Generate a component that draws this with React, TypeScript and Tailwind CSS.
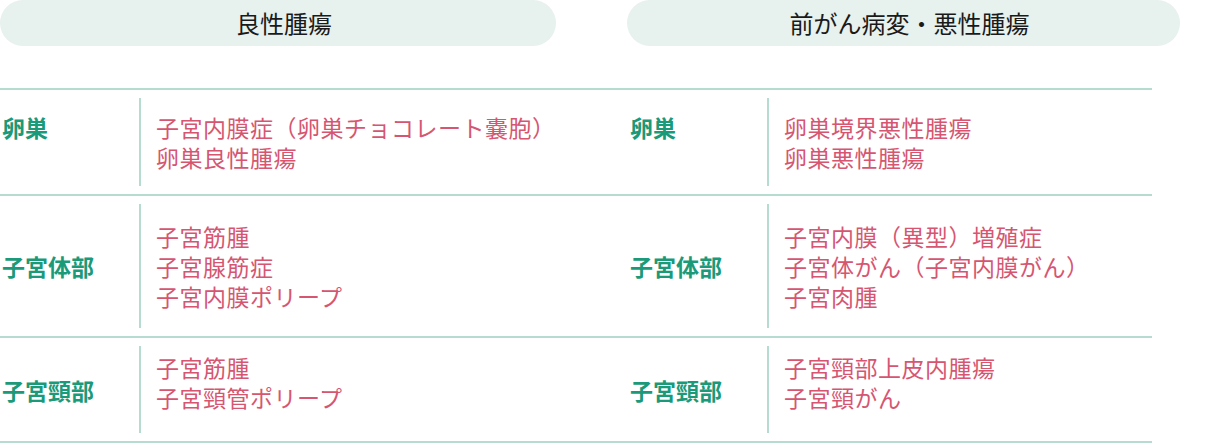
import React from "react";

type Row = { label: string; items: string[]; h: string; top?: boolean; up?: boolean };

const left: Row[] = [
  { label: "卵巣", items: ["子宮内膜症（卵巣チョコレート嚢胞）", "卵巣良性腫瘍"], h: "h-[106px]", top: true },
  { label: "子宮体部", items: ["子宮筋腫", "子宮腺筋症", "子宮内膜ポリープ"], h: "h-[142px]" },
  { label: "子宮頸部", items: ["子宮筋腫", "子宮頸管ポリープ"], h: "h-[105px]", up: true },
];

const right: Row[] = [
  { label: "卵巣", items: ["卵巣境界悪性腫瘍", "卵巣悪性腫瘍"], h: "h-[106px]", top: true },
  { label: "子宮体部", items: ["子宮内膜（異型）増殖症", "子宮体がん（子宮内膜がん）", "子宮肉腫"], h: "h-[142px]" },
  { label: "子宮頸部", items: ["子宮頸部上皮内腫瘍", "子宮頸がん"], h: "h-[105px]", up: true },
];

function Table({ rows, className }: { rows: Row[]; className: string }) {
  return (
    <div className={`border-t-2 border-[#b6dcd2] ${className}`}>
      {rows.map((r, i) => (
        <div key={i} className={`flex border-b-2 border-[#b6dcd2] ${r.h}`}>
          <div
            className={`w-[139px] shrink-0 pl-[2px] flex ${r.top ? "items-start pt-[22px]" : "items-center"} text-[23px] leading-[30px] font-bold text-[#1a9a79]`}
          >
            {r.label}
          </div>
          <div
            className={`my-[8px] border-l-2 border-[#b6dcd2] pl-[15px] flex flex-col justify-center text-[23px] leading-[30px] text-[#d65672] tracking-[0.5px] ${r.up ? "pb-[16px]" : ""}`}
          >
            {r.items.map((t, j) => (
              <div key={j}>{t}</div>
            ))}
          </div>
        </div>
      ))}
    </div>
  );
}

export default function App() {
  return (
    <div
      className="w-[1215px] h-[447px] bg-white overflow-hidden"
      style={{ fontFamily: '"Noto Sans CJK JP", "Noto Sans", sans-serif' }}
    >
      <div className="flex gap-[71px] w-[1180px]">
        <div className="w-[556px] h-[46px] rounded-[23px] bg-[#e7f1ee] flex items-center justify-center pl-[12px] text-[24px] text-[#1a1a1a]">
          良性腫瘍
        </div>
        <div className="flex-1 h-[46px] rounded-[23px] bg-[#e7f1ee] flex items-center justify-center pl-[12px] text-[24px] text-[#1a1a1a]">
          前がん病変・悪性腫瘍
        </div>
      </div>
      <div className="mt-[42px] flex w-[1152px]">
        <Table rows={left} className="w-[628px]" />
        <Table rows={right} className="flex-1" />
      </div>
    </div>
  );
}
